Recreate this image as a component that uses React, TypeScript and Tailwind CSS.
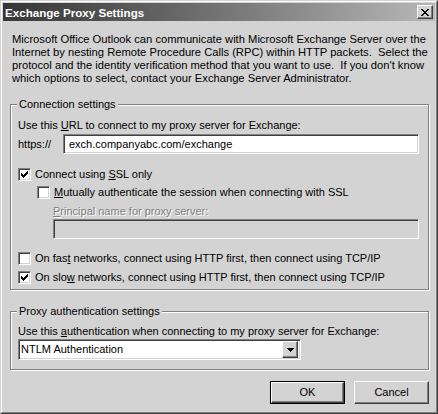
import type { ReactNode } from "react";

const FACE = "bg-[#d3d3d3]";
const SUNKEN =
  "border border-t-[#808080] border-l-[#808080] border-r-white border-b-white shadow-[inset_1px_1px_0_#404040,inset_-1px_-1px_0_#d3d3d3]";
const RAISED =
  "border border-t-white border-l-white border-r-[#404040] border-b-[#404040] shadow-[inset_-1px_-1px_0_#808080]";

function CloseGlyph() {
  return (
    <svg width="8" height="7" viewBox="0 0 8 7" className="block">
      <path
        fill="#000"
        d="M0 0h2v1H0zM6 0h2v1H6zM1 1h2v1H1zM5 1h2v1H5zM2 2h4v1H2zM3 3h2v1H3zM2 4h4v1H2zM1 5h2v1H1zM5 5h2v1H5zM0 6h2v1H0zM6 6h2v1H6z"
      />
    </svg>
  );
}

function CheckMark() {
  return (
    <svg width="7" height="7" viewBox="0 0 7 7" className="block">
      <path
        fill="#000"
        d="M0 2h1v3H0zM1 3h1v3H1zM2 4h1v3H2zM3 3h1v3H3zM4 2h1v3H4zM5 1h1v3H5zM6 0h1v3H6z"
      />
    </svg>
  );
}

function Checkbox({ checked, children, className = "" }: { checked?: boolean; children: ReactNode; className?: string }) {
  return (
    <div className={`flex items-center h-[13px] ${className}`}>
      <div className={`w-[13px] h-[13px] bg-white flex items-center justify-center shrink-0 ${SUNKEN}`}>
        {checked && <CheckMark />}
      </div>
      <span className="ml-[4px] leading-[13px] whitespace-nowrap">{children}</span>
    </div>
  );
}

function GroupBox({ title, className = "", children }: { title: string; className?: string; children: ReactNode }) {
  return (
    <div
      className={`relative border border-[#808080] shadow-[inset_1px_1px_0_#fff,1px_1px_0_#fff] pl-[7px] ${className}`}
    >
      <span className={`absolute left-[6px] top-[-7px] px-[2px] leading-[13px] ${FACE}`}>{title}</span>
      {children}
    </div>
  );
}

export default function App() {
  return (
    <div
      className={`w-[438px] h-[414px] border border-t-[#d3d3d3] border-l-[#d3d3d3] border-r-[#404040] border-b-[#404040] ${FACE} font-['Liberation_Sans',Arial,sans-serif] text-[11px] text-black`}
    >
      <div className="h-full border border-t-white border-l-white border-r-[#808080] border-b-[#808080] p-px flex flex-col">
        <div className="h-[18px] flex items-center justify-between bg-gradient-to-r from-[#363636] to-[#b8b8b8] pl-[2px] pr-[2px]">
          <span className="text-white font-bold text-[11.6px] leading-[13px]">Exchange Proxy Settings</span>
          <div className={`w-[16px] h-[14px] flex items-center justify-center ${FACE} ${RAISED}`}>
            <CloseGlyph />
          </div>
        </div>

        <div className="pl-[7px] pr-[6px] flex flex-col">
          <div className="mt-[12px] pl-[2px] text-[11.2px] leading-[13px] whitespace-nowrap">
            <div>Microsoft Office Outlook can communicate with Microsoft Exchange Server over the</div>
            <div>Internet by nesting Remote Procedure Calls (RPC) within HTTP packets.&nbsp; Select the</div>
            <div>protocol and the identity verification method that you want to use.&nbsp; If you don't know</div>
            <div>which options to select, contact your Exchange Server Administrator.</div>
          </div>

          <GroupBox title="Connection settings" className="mt-[19px] h-[186px]">
            <div className="pt-[14px] leading-[13px] whitespace-nowrap">
              Use this <u>U</u>RL to connect to my proxy server for Exchange:
            </div>
            <div className="mt-[2px] flex items-center h-[20px]">
              <span className="w-[45px] leading-[13px]">https://</span>
              <div className={`w-[356px] h-[20px] bg-white flex items-center pl-[5px] ${SUNKEN}`}>
                <span className="leading-[13px]">exch.companyabc.com/exchange</span>
              </div>
            </div>
            <Checkbox checked className="mt-[14px]">
              Connect using <u>S</u>SL only
            </Checkbox>
            <Checkbox className="mt-[5px] ml-[19px]">
              <u>M</u>utually authenticate the session when connecting with SSL
            </Checkbox>
            <div className="mt-[6px] ml-[35px] leading-[13px] text-[#808080] [text-shadow:1px_1px_0_#fff]">
              <u>P</u>rincipal name for proxy server:
            </div>
            <div className={`mt-[1px] ml-[35px] w-[366px] h-[20px] ${FACE} ${SUNKEN}`} />
            <Checkbox className="mt-[13px]">
              On fas<u>t</u> networks, connect using HTTP first, then connect using TCP/IP
            </Checkbox>
            <Checkbox checked className="mt-[6px]">
              On slo<u>w</u> networks, connect using HTTP first, then connect using TCP/IP
            </Checkbox>
          </GroupBox>

          <GroupBox title="Proxy authentication settings" className="mt-[21px] h-[59px]">
            <div className="pt-[13px] leading-[13px] whitespace-nowrap">
              Use this <u>a</u>uthentication when connecting to my proxy server for Exchange:
            </div>
            <div className={`mt-[1px] w-[283px] h-[21px] bg-white flex items-center justify-between pl-[2px] pr-[2px] ${SUNKEN}`}>
              <span className="leading-[13px]">NTLM Authentication</span>
              <div className={`w-[16px] h-[17px] flex items-center justify-center ${FACE} ${RAISED}`}>
                <svg width="7" height="4" viewBox="0 0 7 4" className="block">
                  <path fill="#000" d="M0 0h7v1H0zM1 1h5v1H1zM2 2h3v1H2zM3 3h1v1H3z" />
                </svg>
              </div>
            </div>
          </GroupBox>

          <div className="mt-[11px] flex justify-end gap-[9px]">
            <div className="w-[75px] h-[23px] border border-black">
              <div className={`w-full h-full flex items-center justify-center ${RAISED}`}>OK</div>
            </div>
            <div className={`w-[75px] h-[23px] flex items-center justify-center ${RAISED}`}>Cancel</div>
          </div>
        </div>
      </div>
    </div>
  );
}
